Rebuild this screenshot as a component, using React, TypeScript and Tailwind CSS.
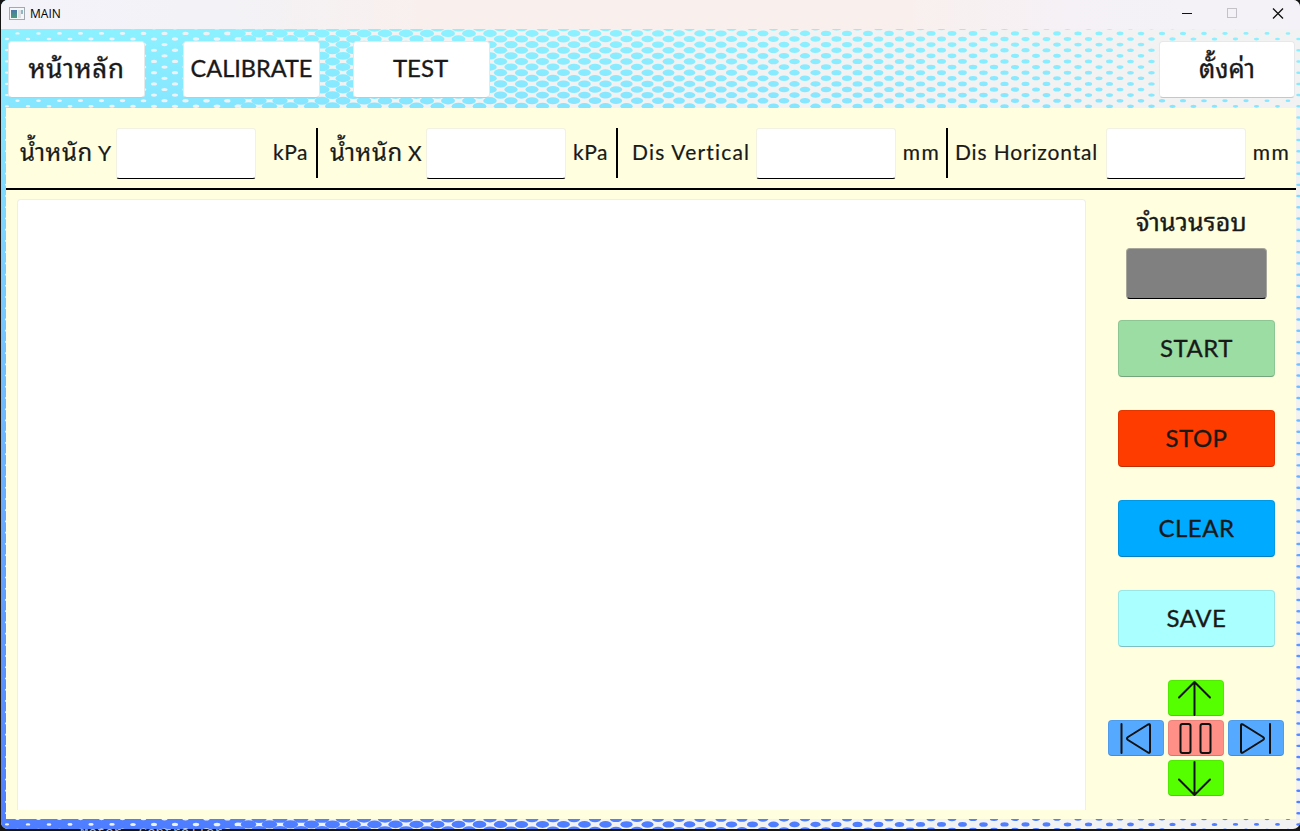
import type { ReactNode } from "react";

const dots: { x: number; y: number; r: number; light: boolean }[] = [];

function radiusAt(x: number) {
  const stops = [[0, 0.82], [165, 0.76], [330, 0.71], [658, 0.57], [973, 0.41], [1300, 0.22]];
  for (let i = 1; i < stops.length; i++) {
    if (x <= stops[i][0]) {
      const [x0, r0] = stops[i - 1];
      const [x1, r1] = stops[i];
      return r0 + ((r1 - r0) * (x - x0)) / (x1 - x0);
    }
  }
  return 0.22;
}

for (let row = -1; row < 144; row++) {
  const y = 33.4 + row * 5.61;
  for (let col = -1; col < 63; col++) {
    const inPanel = col * 21 > 20 && col * 21 < 1270 && y > 118 && y < 808;
    if (inPanel) continue;
    const x = 7 + col * 21 + (row % 2 ? 10.5 : 0);
    if (x >= 230) dots.push({ x, y, r: radiusAt(x), light: false });
    const lx = x + 10.5;
    if (lx < 242) dots.push({ x: lx, y, r: 0.2 + (lx / 240) * 0.13, light: true });
  }
}

function Halftone() {
  return (
    <svg className="absolute inset-0 h-full w-full" viewBox="0 0 1300 831">
      <defs>
        <linearGradient id="sky" gradientUnits="userSpaceOnUse" x1="0" y1="29" x2="0" y2="829">
          <stop offset="0" stopColor="#8cf1ff" />
          <stop offset="1" stopColor="#4f7dff" />
        </linearGradient>
      </defs>
      <rect x="0" y="0" width="1300" height="831" fill="#f2f2f2" />
      <rect x="0" y="0" width="236" height="831" fill="url(#sky)" />
      {dots.map((d, i) => (
        <ellipse key={i} cx={d.x} cy={d.y} rx={d.r * 10.5} ry={d.r * 5.61} fill={d.light ? "#eef2f6" : "url(#sky)"} />
      ))}
    </svg>
  );
}

function NavButton({ children, className }: { children: ReactNode; className: string }) {
  return (
    <button className={`flex h-[57px] items-center justify-center rounded-[4px] border border-[#e5e9ea] border-b-[#c4c8c9] bg-white whitespace-nowrap [-webkit-text-stroke:0.35px_#191919] ${className}`}>
      {children}
    </button>
  );
}

function Field() {
  return <div className="h-[51px] w-[140px] shrink-0 rounded-[3px] border border-[#f1f1e4] border-b-black bg-white" />;
}

function Action({ children, className }: { children: ReactNode; className: string }) {
  return (
    <button className={`ml-[32px] flex h-[57px] w-[157px] items-center justify-center rounded-[4px] border border-black/10 border-b-black/25 pb-[2px] text-[24px] tracking-[0.5px] [-webkit-text-stroke:0.35px_#191919] ${className}`}>
      {children}
    </button>
  );
}

function Pad({ children, className }: { children: ReactNode; className: string }) {
  return (
    <button className={`h-[36px] w-[56px] overflow-hidden rounded-[4px] shadow-[inset_0_0_0_1px_rgba(0,0,0,0.08),inset_0_-1px_0_rgba(0,0,0,0.1)] ${className}`}>
      <svg viewBox="0 0 56 36" className="h-[36px] w-[56px]" fill="none" stroke="#111" strokeWidth="2" strokeLinecap="round" strokeLinejoin="round">
        {children}
      </svg>
    </button>
  );
}

export default function App() {
  return (
    <div className="relative flex h-[831px] w-[1300px] flex-col overflow-hidden bg-[#151515] font-['Lato','Noto_Sans_Thai_Looped','Loma','Noto_Sans_Thai','Noto_Sans',sans-serif] text-[#191919]">
      <div className="absolute top-[827px] left-[80px] text-[14px] leading-[12px] whitespace-pre text-[#bbb] font-['Liberation_Mono',monospace]">Motor  Controller</div>
      <div className="relative ml-px flex h-[829px] w-[1299px] flex-col overflow-hidden rounded-[7px]">
        <div className="absolute top-0 -left-px h-[831px] w-[1300px]">
          <Halftone />
        </div>
        <header className="relative flex h-[29px] shrink-0 items-center bg-[linear-gradient(90deg,#f3f3fa_0%,#f3f2f6_18%,#f9f0ee_32%,#f9f0ee_70%,#f5f1f6_82%,#f4f1f8_100%)] pb-[2px] pl-[8px]">
          <svg className="h-[13px] w-[16px]" viewBox="0 0 16 13">
            <rect x=".5" y=".5" width="15" height="12" fill="#f4f6f8" stroke="#a2a9af" />
            <defs>
              <linearGradient id="app" x1="0" y1="0" x2="0" y2="1">
                <stop stopColor="#4b76a8" />
                <stop offset="1" stopColor="#4a9c78" />
              </linearGradient>
            </defs>
            <rect x="2" y="3" width="6" height="8" fill="url(#app)" />
            <rect x="9" y="3" width="3" height="8" fill="#dde1e5" />
            <rect x="12" y="3" width="2" height="4" fill="#8fb7c4" />
          </svg>
          <span className="ml-[5px] text-[12px] text-black font-['Open_Sans',sans-serif]">MAIN</span>
          <svg className="ml-auto h-[29px] w-[140px]" viewBox="0 0 140 29" fill="none" stroke="#111">
            <path d="M22 14.5h10" />
            <rect x="67.500" y="9.500" width="9" height="9" stroke="#c5c1c9" />
            <path d="M113 9.500l10 10m0-10l-10 10" strokeWidth="1.3" />
          </svg>
        </header>
        <nav className="relative flex h-[79px] shrink-0 pt-[12px] pl-[7px]">
          <NavButton className="w-[137px] pb-[3px] text-[26px] tracking-[0.6px]">หน้าหลัก</NavButton>
          <NavButton className="ml-[38px] w-[137px] pb-[1px] text-[23.500px]">CALIBRATE</NavButton>
          <NavButton className="ml-[33px] w-[137px] pr-[2px] pb-[3px] text-[24px]">TEST</NavButton>
          <NavButton className="mr-[5px] ml-auto w-[136px] pb-[3px] text-[25.500px]">ตั้งค่า</NavButton>
        </nav>
        <main className="relative ml-[5px] flex h-[711px] w-[1290px] flex-col bg-[#ffffdf]">
          <section className="flex h-[82px] shrink-0 border-b-2 border-black pt-[20px] text-[21px] leading-[48px] whitespace-nowrap [-webkit-text-stroke:0.2px_#191919]">
            <div className="flex w-[312px]">
              <span className="ml-[14px] w-[96px]"><span className="text-[24px] tracking-[0.5px]">น้ำหนัก</span> Y</span>
              <Field />
              <span className="ml-auto mr-[8px] tracking-[0.5px]">kPa</span>
              <i className="h-[50px] w-[2px] bg-black" />
            </div>
            <div className="flex w-[300px]">
              <span className="ml-[12px] w-[96px]"><span className="text-[24px] tracking-[0.5px]">น้ำหนัก</span> X</span>
              <Field />
              <span className="ml-auto mr-[8px] tracking-[0.5px]">kPa</span>
              <i className="h-[50px] w-[2px] bg-black" />
            </div>
            <div className="flex w-[330px]">
              <span className="ml-[14px] w-[124px] tracking-[1.200px]">Dis Vertical</span>
              <Field />
              <span className="ml-auto mr-[6px] tracking-[1.300px]">mm</span>
              <i className="h-[50px] w-[2px] bg-black" />
            </div>
            <div className="flex w-[348px]">
              <span className="ml-[7px] w-[151px] tracking-[0.850px]">Dis Horizontal</span>
              <Field />
              <span className="ml-auto mr-[6px] tracking-[1.300px]">mm</span>
            </div>
          </section>
          <section className="flex">
            <div className="mt-[9px] ml-[11px] h-[611px] w-[1069px] rounded-t-[4px] border border-b-0 border-[#eeeeee] bg-white" />
            <aside className="w-[209px]">
              <div className="mt-[14px] ml-[50px] h-[34px] text-[25px] leading-[34px] tracking-[0.2px] [-webkit-text-stroke:0.35px_#191919]">จำนวนรอบ</div>
              <div className="mt-[10px] ml-[40px] h-[51px] w-[141px] rounded-[4px] border border-[#a6a69c] border-b-black bg-[#808080]" />
              <div className="mt-[21px] flex flex-col gap-[33px]">
                <Action className="bg-[#9cdda4]">START</Action>
                <Action className="bg-[#ff3c00]">STOP</Action>
                <Action className="bg-[#00aaff]">CLEAR</Action>
                <Action className="bg-[#aaffff]">SAVE</Action>
              </div>
              <div className="mt-[33px] ml-[22px] grid w-[176px] grid-cols-3 gap-[4px]">
                <Pad className="col-start-2 bg-[#55ff00]"><path d="M26.500 35V2M11 17.500L26.500 2 42 17.500" /></Pad>
                <Pad className="col-start-1 bg-[#55aaff]"><path d="M13.500 4v29M42 5.500v26q0 2-2 1L20 20q-2-1.500 0-3L40 4.500q2-1 2 1z" /></Pad>
                <Pad className="bg-[#ff9088]"><rect x="12.500" y="4" width="10" height="29" rx="2" /><rect x="32.500" y="4" width="10" height="29" rx="2" /></Pad>
                <Pad className="bg-[#55aaff]"><path d="M42 4v29M13 5.500v26q0 2 2 1L35 20q2-1.500 0-3L15 4.500q-2-1-2 1z" /></Pad>
                <Pad className="col-start-2 bg-[#55ff00]"><path d="M26.500 2v33M11 19.500L26.500 35 42 19.500" /></Pad>
              </div>
            </aside>
          </section>
        </main>
      </div>
    </div>
  );
}
